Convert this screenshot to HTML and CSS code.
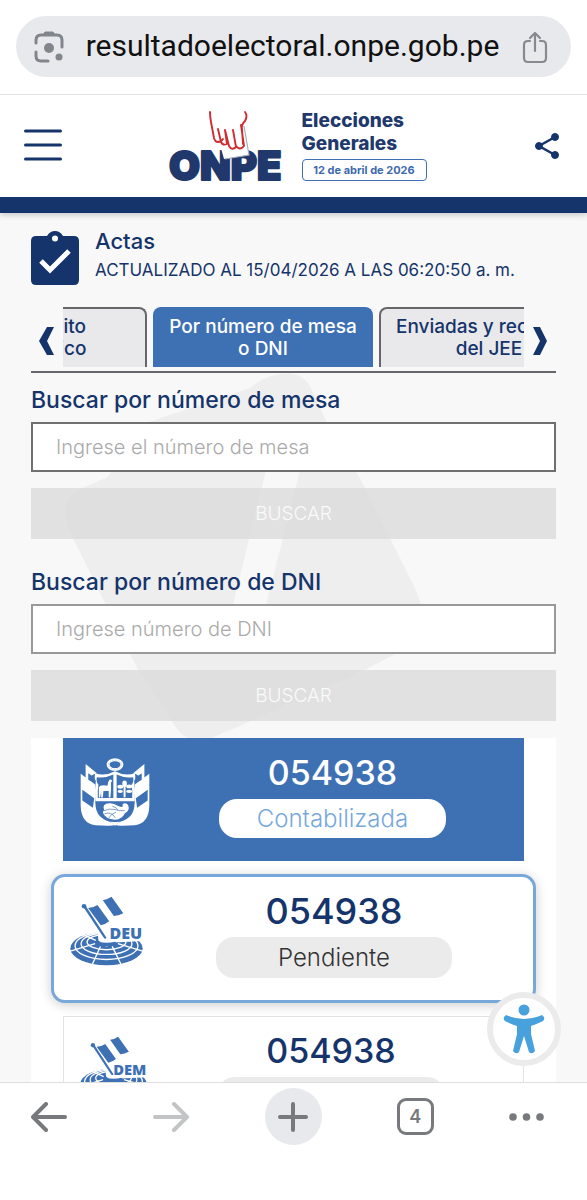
FILE: index.html
```html
<!DOCTYPE html>
<html lang="es">
<head>
<meta charset="utf-8">
<meta name="viewport" content="width=device-width, initial-scale=1">
<title>ONPE - Actas</title>
<link rel="stylesheet" href="styles.css">
</head>
<body>
<div class="browser-top">
  <div class="address">
    <button class="plain" aria-label="Buscar con cámara">
      <svg width="30" height="34" viewBox="0 0 30 34" fill="none" stroke="#80868b" stroke-width="3" stroke-linecap="round">
        <path d="M2 13v-3q0-5 5-5h16q5 0 5 5v7M2 22v4q0 5 5 5h7"/>
        <path d="M9 5l2-3h8l2 3z" fill="#80868b" stroke-width="1"/>
        <circle cx="15" cy="18" r="5" fill="#80868b" stroke="none"/><circle cx="25" cy="27" r="3.5" fill="#80868b" stroke="none"/>
      </svg>
    </button>
    <span class="url">resultadoelectoral.onpe.gob.pe</span>
    <button class="plain" aria-label="Compartir página">
      <svg width="28" height="34" viewBox="0 0 28 34" fill="none" stroke="#868a90" stroke-width="2.2" stroke-linecap="round" stroke-linejoin="round">
        <path d="M9 11H7q-4 0-4 4v13q0 4 4 4h14q4 0 4-4V15q0-4-4-4h-2M14 21V3M9 8l5-5 5 5"/>
      </svg>
    </button>
  </div>
</div>

<div class="page">
  <header class="site-header">
    <button class="plain" aria-label="Menú">
      <svg width="38" height="34" viewBox="0 0 38 34" stroke="#15346b" stroke-width="3" stroke-linecap="round"><path d="M1.500 2h35M1.500 16h35M1.500 30h35"/></svg>
    </button>
    <a class="brand" href="#">
      <svg class="logo" width="116" height="74" viewBox="0 0 116 74" role="img" aria-label="ONPE">
        <text class="logo-text" x="-1" y="71">ONPE</text>
        <path d="M49 32L74 17 79 46 54 50z" fill="#fff"/>
        <path d="M55 50L79 46 74 17" fill="none" stroke="#a9adb5" stroke-width="1.200"/>
        <path d="M40 3q0 5 1 10l3 16q1 4 4 4t5-3M48 20l3 13q2 4 6 2l-2-14M57 34l-2-13 4 16q3 5 7 1l-3-17M66 37q4 5 8 0l-3-21M75 3q3 4 0 9-4 4-3 8l1 15" fill="none" stroke="#d12c2f" stroke-width="1.900" stroke-linecap="round" stroke-linejoin="round"/>
      </svg>
      <span class="election"><strong>Elecciones<br>Generales</strong><small>12 de abril de 2026</small></span>
    </a>
    <button class="plain" aria-label="Compartir">
      <svg width="26" height="28" viewBox="0 0 26 28" fill="#15346b" stroke="#15346b"><path d="M21 5L5 14l16 9" fill="none" stroke-width="2.500"/><circle cx="21" cy="5" r="3.500"/><circle cx="5" cy="14" r="3.500"/><circle cx="21" cy="23" r="3.500"/></svg>
    </button>
  </header>

  <main class="content">
    <div class="title">
      <svg class="clipboard" width="48" height="54" viewBox="0 0 48 54"><path d="M5 5h11q3-5 8-5t8 5h11q5 0 5 5v39q0 5-5 5H5q-5 0-5-5V10q0-5 5-5z" fill="#15346b"/><circle cx="24" cy="7.500" r="3" fill="#fff"/><path d="M10 30l9 9 19-19" fill="none" stroke="#fff" stroke-width="5"/></svg>
      <div><h1>Actas</h1><p>ACTUALIZADO AL 15/04/2026 A LAS 06:20:50 a. m.</p></div>
    </div>

    <nav class="tabs">
      <button class="arrow" aria-label="Anterior"><svg width="16" height="28" viewBox="0 0 16 28"><path d="M8 0h7L8 14l7 14H8L0 14z" fill="#15346b"/></svg></button>
      <div class="tab-window"><div class="tab-track">
        <button class="tab">Por ámbito<br>geográfico</button>
        <button class="tab active">Por número de mesa<br>o DNI</button>
        <button class="tab">Enviadas y recibidas<br>del JEE</button>
      </div></div>
      <button class="arrow" aria-label="Siguiente"><svg width="16" height="28" viewBox="0 0 16 28"><path d="M1 0h7l7 14-7 14H1l7-14z" fill="#15346b"/></svg></button>
    </nav>

    <div class="search">
      <svg class="watermark" width="364" height="366" viewBox="62 373 364 366">
        <path d="M108 477Q88 485 75 492Q58 504 68 528L113 619 140 674 177 729Q188 744 212 738Q224 732 235 728L357 674 407 648Q429 636 424 612L415 588 360 478 328 425 311 388Q301 369 276 375 262 378 250 388L140 425z" fill="#eee"/>
        <path d="M268 462h34L255 650 165 628 200 606 231 613z" fill="#f8f8f8"/>
      </svg>
      <form class="field">
        <label for="mesa">Buscar por número de mesa</label>
        <input id="mesa" class="strong" type="text" placeholder="Ingrese el número de mesa">
        <button type="button">BUSCAR</button>
      </form>
      <form class="field">
        <label for="dni">Buscar por número de DNI</label>
        <input id="dni" type="text" placeholder="Ingrese número de DNI">
        <button type="button">BUSCAR</button>
      </form>
    </div>

    <section class="results">
      <article class="card counted">
        <svg class="emblem" viewBox="90 68 210 206">
          <g fill="#fff">
            <path d="M106 86l34 28q-16 2-24 20l-10-7zM284 86l-34 28q16 2 24 20l10-7zM91 116l44 32v47q2 42 60 76-10 4-60 1Q92 266 91 212zM299 116l-44 32v47q-2 42-60 76 10 4 60 1 43-6 44-60z"/>
            <path d="M135 114q30 10 60-6 30 16 60 6 4 14-2 24 4 26 2 56-6 40-60 79-54-39-60-79-2-30 2-56-6-10-2-24z"/>
          </g>
          <g fill="#3e70b4">
            <path d="M114 114l18 12-9 12-9-4zM276 114l-18 12 9 12 9-4zM96 164l36 26-4 29-32-22zM294 164l-36 26 4 29 32-22z"/>
            <path d="M140 126q25 4 50-8v71h-47q-2-20 2-40-8-10-5-23zM250 126q-25 4-50-8v71h47q2-20-2-40 8-10 5-23z"/>
            <path d="M136 199h118q2 32-15 47-18 17-44 16-26 1-44-16-17-15-15-47z"/>
          </g>
          <g fill="#fff">
            <path d="M180 132l7 4-4 6v23l-2 23h-5v-20h-16l-2 20h-5v-18l-3 18h-4v-22q-2-10 4-14 12-3 22 0l3-13z"/>
            <ellipse cx="224" cy="146" rx="7" ry="10"/><ellipse cx="211" cy="155" rx="9" ry="6"/><ellipse cx="238" cy="154" rx="9" ry="6"/><ellipse cx="211" cy="169" rx="8" ry="5"/><ellipse cx="238" cy="169" rx="9" ry="5"/><path d="M221 150h6v37h-6z"/>
            <path d="M162 226q-8-20 16-21 14-1 25 8 12 6 16 1-4-5 2-8 9-3 14 5 6 16-10 24-8 18-30 20-30-2-37-22 1-5 4-7z"/>
          </g>
          <path d="M161 228q17-8 34-4 14 6 29 3M163 237q20-8 33 12M176 250q6-12 22-18M187 214q14 4 17 12" fill="none" stroke="#3e70b4" stroke-width="2"/>
          <ellipse cx="195" cy="88" rx="21" ry="15" fill="none" stroke="#fff" stroke-width="9"/><ellipse cx="195" cy="88" rx="20" ry="14" fill="none" stroke="#3e70b4" stroke-width="1" stroke-dasharray="4 5"/>
        </svg>
        <div class="info"><div class="number">054938</div><div class="status">Contabilizada</div></div>
      </article>

      <article class="card pending selected">
        <svg class="emblem" viewBox="75 80 218 208">
          <g id="globe-flag">
            <ellipse cx="184" cy="236" rx="108" ry="50" fill="#3e70b4"/>
            <g fill="none" stroke="#fff" stroke-width="4"><ellipse cx="184" cy="228" rx="94" ry="41"/><ellipse cx="184" cy="222" rx="76" ry="32"/><ellipse cx="184" cy="217" rx="58" ry="23"/><path d="M166 230L140 287M150 222l-74 22M201 230l28 57M218 222l74 22M152 212l-44-20"/></g>
            <path d="M156 178h142v36l-90 4-24 14-24-20z" fill="#fff"/>
            <path d="M160 216q24 6 50 0l8 10q-34 8-66 0z" fill="#3e70b4"/>
            <path d="M120 113l61 92" stroke="#fff" stroke-width="10"/>
            <g fill="#3e70b4"><circle cx="117" cy="110" r="7"/><path d="M115 112l7-3 62 95q-3 5-7 2zM129 115q17-1 28-9l35 49q-12 10-25 12zM173 92q13-1 26-10l35 49q-14 8-28 8z"/></g>
          </g>
          <text class="emblem-text" x="193" y="208">DEU</text>
        </svg>
        <div class="info"><div class="number">054938</div><div class="status">Pendiente</div></div>
      </article>

      <article class="card pending last">
        <svg class="emblem" viewBox="75 80 218 208"><use href="#globe-flag"/><text class="emblem-text" x="183" y="208">DEM</text></svg>
        <div class="info"><div class="number">054938</div><div class="status">Pendiente</div></div>
      </article>
    </section>
  </main>
</div>

<nav class="browser-bottom">
  <button class="plain" aria-label="Atrás"><svg width="36" height="30" viewBox="0 0 36 30" fill="none" stroke="#77797d" stroke-width="4" stroke-linecap="round" stroke-linejoin="round"><path d="M34 15H2M15 2L2 15l13 13"/></svg></button>
  <button class="plain" aria-label="Adelante"><svg width="36" height="30" viewBox="0 0 36 30" fill="none" stroke="#c3c4c6" stroke-width="4" stroke-linecap="round" stroke-linejoin="round"><path d="M2 15h32M21 2l13 13-13 13"/></svg></button>
  <button class="plain new-tab" aria-label="Nueva pestaña"><svg width="30" height="30" viewBox="0 0 30 30" stroke="#77797d" stroke-width="4" stroke-linecap="round"><path d="M2 15h26M15 2v26"/></svg></button>
  <button class="plain" aria-label="Pestañas"><span class="count">4</span></button>
  <button class="plain more" aria-label="Más"><svg width="35" height="8" viewBox="0 0 35 8" fill="#77797d"><circle cx="4" cy="4" r="3.800"/><circle cx="17.500" cy="4" r="3.800"/><circle cx="31" cy="4" r="3.800"/></svg></button>
</nav>

<button class="accessibility" aria-label="Accesibilidad"><svg width="42" height="50" viewBox="0 0 42 50"><circle cx="21" cy="6" r="5.500" fill="#47a1dc"/><path d="M3 11q9 4 18 4t18-4q4 3 1 6-6 3-12 5v8l4 17q-3 4-6 1l-5-16-5 16q-3 3-6-1l4-17v-8q-6-2-12-5-3-3 1-6z" fill="#47a1dc"/></svg></button>
</body>
</html>
```

FILE: styles.css
```css
* { box-sizing: border-box; }

body {
  margin: 0;
  height: 100vh;
  display: flex;
  flex-direction: column;
  background: #fff;
  color: #15346b;
  font-family: Inter, "Open Sans", sans-serif;
}

button, input { font: inherit; }
h1, p { margin: 0; }
svg { display: block; flex: none; }

.plain {
  display: flex;
  align-items: center;
  justify-content: center;
  padding: 0;
  border: 0;
  background: none;
}

/* Browser chrome */
.browser-top {
  flex: none;
  padding: 16px 16px 17px;
  border-bottom: 1px solid #e4e4e6;
}

.address {
  display: flex;
  align-items: center;
  justify-content: space-between;
  height: 61px;
  padding: 0 22px 0 18px;
  border-radius: 31px;
  background: #e8e9ed;
}

.url {
  padding-bottom: 2px;
  color: #111;
  font: 30px/36px Roboto, sans-serif;
}

.browser-bottom {
  flex: none;
  display: flex;
  justify-content: space-between;
  height: 118px;
  padding: 5px 43px 0 20px;
  border-top: 1px solid #dedede;
}

.browser-bottom .plain { width: 57px; height: 57px; }
.browser-bottom .more { width: 35px; }
.browser-bottom .new-tab { border-radius: 50%; background: #e8e9ed; }

.count {
  width: 37px;
  height: 37px;
  border: 3px solid #77797d;
  border-radius: 9px;
  color: #77797d;
  font-size: 18px;
  font-weight: 600;
  line-height: 31px;
}

/* Site */
.page {
  flex: 1;
  min-height: 0;
  overflow: hidden;
  background: #f8f8f8;
}

.site-header {
  position: relative;
  display: flex;
  align-items: center;
  justify-content: space-between;
  height: 118px;
  padding: 0 27px 0 24px;
  border-bottom: 16px solid #15346b;
  background: #fff;
  box-shadow: 0 2px 6px #0003;
}

.brand {
  display: flex;
  gap: 16px;
  color: #21386c;
  text-decoration: none;
}

.logo { overflow: visible; }

.logo-text {
  fill: #21386c;
  stroke: #21386c;
  stroke-width: 2px;
  stroke-linejoin: round;
  font-size: 40px;
  font-weight: 900;
}

.election strong {
  display: block;
  font-size: 19px;
  font-weight: 800;
  line-height: 23px;
}

.election small {
  display: block;
  width: 125px;
  margin-top: 4px;
  border: 1px solid #3e70b4;
  border-radius: 4px;
  color: #3e6aad;
  font-size: 11px;
  font-weight: 700;
  line-height: 20px;
  text-align: center;
}

.content { padding: 14px 31px 0; }

.title {
  display: flex;
  gap: 16px;
}

.clipboard { margin-top: 4px; }

.title h1 {
  font-size: 22px;
  font-weight: 500;
  line-height: 28px;
}

.title p {
  font-size: 17px;
  line-height: 30px;
  white-space: nowrap;
}

.tabs {
  display: flex;
  margin-top: 22px;
  padding-bottom: 4px;
  border-bottom: 2px solid #66676b;
}

.arrow {
  width: 32px;
  padding: 8px 8px 0;
  border: 0;
  background: none;
}

.tab-window {
  flex: 1;
  min-width: 0;
  overflow: hidden;
}

.tab-track {
  display: flex;
  gap: 6px;
  margin-left: -136px;
}

.tab {
  flex: none;
  width: 220px;
  height: 60px;
  padding: 0;
  border: 2px solid #66676b;
  border-bottom: 0;
  border-radius: 8px 8px 0 0;
  background: #e9e9eb;
  color: #15346b;
  font-size: 19px;
  font-weight: 500;
  line-height: 22px;
}

.tab.active {
  border-color: #3e70b4;
  background: #3e70b4;
  color: #fff;
}

.search {
  position: relative;
  display: grid;
  gap: 26px;
  padding: 10px 0 17px;
}

.watermark {
  position: absolute;
  top: 0;
  left: 31px;
}

.field {
  position: relative;
  display: grid;
}

.field label {
  font-size: 23px;
  font-weight: 500;
  line-height: 34px;
}

.field input {
  width: 100%;
  height: 50px;
  margin-top: 5px;
  padding: 0 23px;
  border: 2px solid #999;
  border-radius: 0;
  background: #fff;
  font-size: 20px;
}

.field .strong { border-color: #707070; }

.field input::placeholder {
  color: #aaa;
  font-weight: 300;
  opacity: 1;
}

.field button {
  height: 51px;
  margin-top: 16px;
  border: 0;
  background: #dadadabf;
  color: #fafafa;
  font-size: 19px;
  font-weight: 300;
}

/* Results */
.results {
  position: relative;
  display: grid;
  gap: 13px;
  padding: 0 32px;
  background: #fff;
}

.card {
  display: flex;
  padding: 12px 8px 22px 16px;
  border: 1px solid #e2e2e2;
}

.counted {
  border-color: #3e70b4;
  background: #3e70b4;
  color: #fff;
}

.emblem {
  width: 70px;
  height: 68px;
  margin-top: 7px;
}

.emblem-text {
  fill: #3e70b4;
  font-family: "Open Sans", sans-serif;
  font-size: 48px;
  font-weight: 800;
}

.info {
  flex: 1;
  text-align: center;
}

.number {
  font-size: 34px;
  font-weight: 500;
  line-height: 44px;
}

.status {
  width: 62%;
  margin: 4px auto 0;
  border-radius: 18px;
  background: #ebebeb;
  color: #333;
  font-size: 24px;
  font-weight: 300;
  line-height: 39px;
}

.counted .status {
  background: #fff;
  color: #76a9dc;
}

.selected {
  margin: 0 -12px;
  border: 3px solid #78a7da;
  border-radius: 14px;
  background: #fff;
  box-shadow: 0 2px 12px #0003;
}

.selected .emblem { width: 73px; height: 70px; }
.selected .number { font-size: 36px; }
.selected .status { line-height: 41px; }
.last .emblem { width: 67px; height: 64px; }

.accessibility {
  position: absolute;
  right: 26px;
  bottom: 134px;
  display: flex;
  align-items: center;
  justify-content: center;
  width: 74px;
  height: 74px;
  padding: 0;
  border: 6px solid #ebebeb;
  border-radius: 50%;
  background: #fff;
}
```
